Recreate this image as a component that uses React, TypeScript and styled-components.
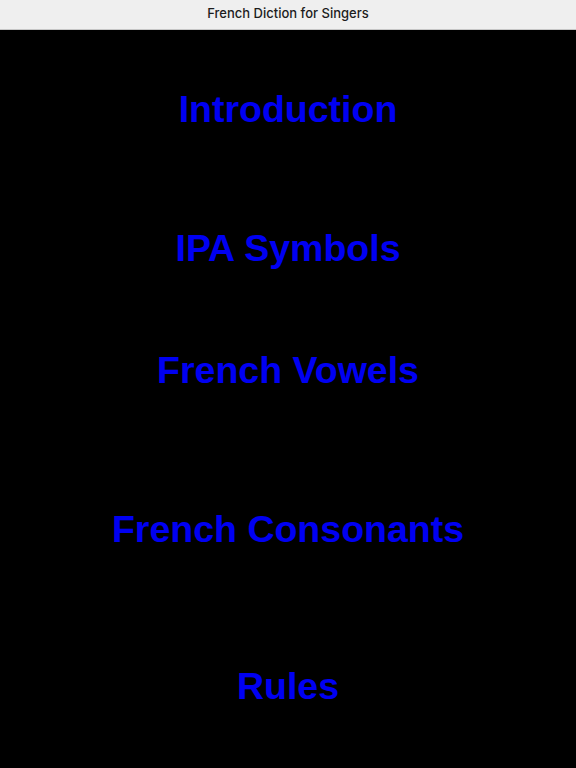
import React from "react";
import styled, { createGlobalStyle } from "styled-components";

const GlobalStyle = createGlobalStyle`
    html, body {
        margin: 0;
        padding: 0;
        background-color: #000;
    }
    body {
        font-family: "Liberation Sans", Arial, sans-serif;
    }
`

const Spage = styled.div`
    width: 576px;
    height: 768px;
    background-color: #000;
    display: flex;
    flex-direction: column;
    overflow: hidden;
`

const SnavBar = styled.div`
    height: 29px;
    background-color: #efefef;
    border-bottom: 1px solid #c6c6c6;
    display: flex;
    align-items: center;
    justify-content: center;
`

const Stitle = styled.div`
    font-family: "Inter", "Liberation Sans", sans-serif;
    font-size: 13px;
    font-weight: 500;
    color: #1c1c1c;
    margin-top: -3px;
`

const Smenu = styled.ul`
    list-style-type: none;
    margin: 0;
    padding: 0;
    display: flex;
    flex-direction: column;
    align-items: center;
`

const SmenuItem = styled.li<{ $gap: number }>`
    margin-top: ${(p) => p.$gap}px;
    font-size: 37.5px;
    line-height: 42px;
    font-weight: bold;
    color: #0000f2;
    :hover {
        cursor: pointer;
    }
`

const items = [
    { label: "Introduction", gap: 58 },
    { label: "IPA Symbols", gap: 97 },
    { label: "French Vowels", gap: 80 },
    { label: "French Consonants", gap: 117 },
    { label: "Rules", gap: 115 },
];

const App = () => {
    return (
        <>
            <GlobalStyle />
            <Spage>
                <SnavBar>
                    <Stitle>French Diction for Singers</Stitle>
                </SnavBar>
                <Smenu>
                    {items.map((item) => (
                        <SmenuItem key={item.label} $gap={item.gap}>
                            {item.label}
                        </SmenuItem>
                    ))}
                </Smenu>
            </Spage>
        </>
    )
}

export default App;
